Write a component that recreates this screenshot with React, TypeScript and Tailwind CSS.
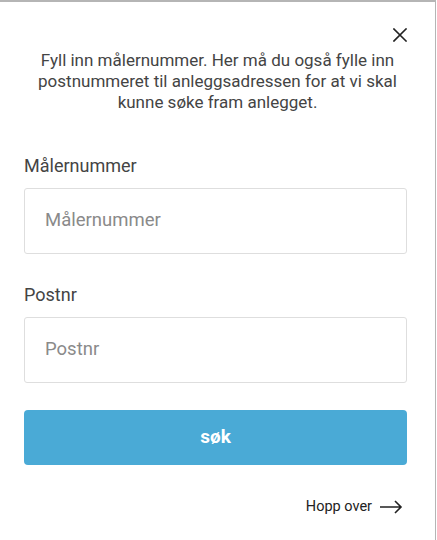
import React from "react";

export default function App() {
  return (
    <div
      className="w-[436px] h-[540px] bg-white border-t-2 border-r border-[#b5b5b5] box-border"
      style={{ fontFamily: "Roboto, 'Liberation Sans', sans-serif" }}
    >
      <div className="flex justify-end pt-[26px] pr-[28px]">
        <svg width="14" height="14" viewBox="0 0 14 14" fill="none">
          <path d="M1 1L13 13M13 1L1 13" stroke="#222" strokeWidth="1.6" strokeLinecap="square" />
        </svg>
      </div>
      <p className="mt-[8px] px-[24px] text-center text-[17px] leading-[21px] text-[#444]">
        Fyll inn målernummer. Her må du også fylle inn postnummeret til anleggsadressen for at vi skal kunne søke fram anlegget.
      </p>
      <div className="pl-[24px] pr-[28px] mt-[43px] flex flex-col">
        <label className="text-[18px] leading-[20px] text-[#444]">Målernummer</label>
        <div className="mt-[12px] h-[66px] border border-[#dedede] rounded-[3px] flex items-center pl-[20px] text-[18.5px] text-[#8a8a8a]">
          Målernummer
        </div>
        <label className="mt-[31px] text-[18px] leading-[20px] text-[#444]">Postnr</label>
        <div className="mt-[12px] h-[66px] border border-[#dedede] rounded-[3px] flex items-center pl-[20px] text-[18.5px] text-[#8a8a8a]">
          Postnr
        </div>
        <button className="mt-[27px] h-[55px] rounded-[4px] bg-[#4aaad6] text-white font-bold text-[19px]">
          søk
        </button>
        <div className="mt-[33px] flex justify-end items-center gap-[7px] pr-[4px] h-[17px]">
          <span className="text-[14.5px] text-[#222]">Hopp over</span>
          <svg width="24" height="14" viewBox="0 0 24 14" fill="none">
            <path d="M1 7H22M16 1L22 7L16 13" stroke="#222" strokeWidth="1.6" />
          </svg>
        </div>
      </div>
    </div>
  );
}
